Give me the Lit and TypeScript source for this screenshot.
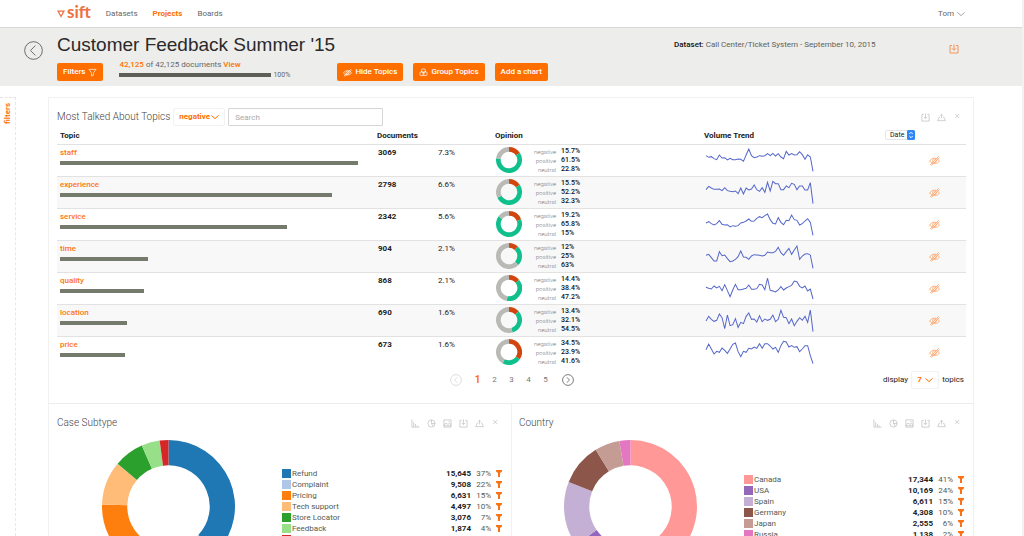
import { LitElement, html, svg, css } from "lit";
import { customElement, property } from "lit/decorators.js";

type Slice = { color: string; value: number };

function ringPath(start: number, end: number, outer: number, inner: number): string {
  const at = (t: number, r: number) => {
    const a = t * Math.PI * 2 - Math.PI / 2;
    return `${(Math.cos(a) * r).toFixed(2)} ${(Math.sin(a) * r).toFixed(2)}`;
  };
  const large = end - start > 0.5 ? 1 : 0;
  return `M${at(start, outer)}A${outer} ${outer} 0 ${large} 1 ${at(end, outer)}L${at(end, inner)}A${inner} ${inner} 0 ${large} 0 ${at(start, inner)}Z`;
}

@customElement("ring-chart")
export class RingChart extends LitElement {
  @property({ attribute: false }) slices: Slice[] = [];
  @property({ type: Number }) inner = 62;

  static styles = css`
    :host { display: block; }
    .ring { display: block; width: 100%; height: auto; }
  `;

  render() {
    const total = this.slices.reduce((sum, s) => sum + s.value, 0);
    let pos = 0;
    return html`<svg class="ring" viewBox="-100 -100 200 200">
      ${this.slices.map((s) => {
        const from = pos;
        pos += s.value / total;
        return svg`<path d=${ringPath(from, pos, 100, this.inner)} fill=${s.color}></path>`;
      })}
    </svg>`;
  }
}

const icons = {
  back: svg`<circle cx="10" cy="10" r="9.3"></circle><path d="M12 4.800 6.800 10l5.200 5.200"></path>`,
  prev: svg`<circle cx="10" cy="10" r="9"></circle><path d="M12 5.500 7.500 10l4.500 4.500"></path>`,
  next: svg`<circle cx="10" cy="10" r="9"></circle><path d="M8 5.500 12.500 10 8 14.500"></path>`,
  funnel: svg`<path d="M2 3h16l-6 8v5l-4 2v-7z"></path>`,
  down: svg`<path d="M1 6l9 8 9-8"></path>`,
  save: svg`<path d="M6 3H2v15h16V3h-4M10 1v11M6 8.500 10 12.500l4-4"></path>`,
  share: svg`<path d="M6.500 9H5l-3.500 8h17L15 9h-1.500M10 12V3M7 6l3-3 3 3"></path>`,
  close: svg`<path d="M5 2l9 9M14 2l-9 9"></path>`,
  bars: svg`<path d="M2 1v17h17M6 17V7M10 17v-6M14 17v-3"></path>`,
  clock: svg`<circle cx="10" cy="10" r="8"></circle><path d="M10 2v8h8M10 10l4 6"></path>`,
  image: svg`<path d="M2 2h16v16H2zM2 13l5-4 4 3 3-2 4 2M12 6h3M2 15h16"></path>`,
  eye: svg`<path d="M1 11c4-7 14-7 18 0-4 6-14 6-18 0zM6.500 10.500a3.500 3.500 0 1 0 7 0 3.500 3.500 0 1 0-7 0M2 18 18 2M4 19 19 5"></path>`,
  group: svg`<circle cx="10" cy="6.500" r="4.700"></circle><circle cx="6.500" cy="12.500" r="4.700"></circle><circle cx="13.500" cy="12.500" r="4.700"></circle>`,
};

@customElement("ui-icon")
export class UiIcon extends LitElement {
  @property() name: keyof typeof icons = "save";

  static styles = css`
    :host { display: inline-block; width: 10px; height: 10px; flex: none; }
    .glyph { display: block; width: 100%; height: 100%; fill: none; stroke: currentColor; stroke-width: var(--weight, 1.5); overflow: visible; }
  `;

  render() {
    return html`<svg class="glyph" viewBox="0 0 20 20">${icons[this.name]}</svg>`;
  }
}

interface Topic {
  name: string;
  docs: number;
  share: string;
  negative: number;
  positive: number;
  neutral: number;
  trend: number[];
}

const topics: Topic[] = [
  { name: "staff", docs: 3069, share: "7.3%", negative: 15.7, positive: 61.5, neutral: 22.8,
    trend: [32,37,35,41,44,30,39,38,45,40,44,44,42,43,49,30,12,32,38,36,32,34,32,26,32,25,33,26,36,41,19,30,26,30,29,20,29,43,29,36,79] },
  { name: "experience", docs: 2798, share: "6.6%", negative: 15.5, positive: 52.2, neutral: 32.3,
    trend: [38,28,33,37,37,36,41,32,41,43,44,42,50,33,51,33,39,36,24,38,43,32,46,16,42,13,20,20,38,38,27,32,19,22,38,27,27,39,39,17,80] },
  { name: "service", docs: 2342, share: "5.6%", negative: 19.2, positive: 65.8, neutral: 15,
    trend: [42,38,44,48,44,35,46,48,47,54,50,52,50,42,40,36,30,37,36,28,23,26,20,15,32,43,45,26,40,47,34,35,18,32,34,48,44,36,29,40,79] },
  { name: "time", docs: 904, share: "2.1%", negative: 12, positive: 25, neutral: 63,
    trend: [43,40,50,60,60,32,44,42,53,62,60,55,47,30,48,49,55,45,41,42,43,45,43,33,35,35,31,19,35,43,32,22,40,27,15,55,45,39,38,42,82] },
  { name: "quality", docs: 868, share: "2.1%", negative: 14.4, positive: 38.4, neutral: 47.2,
    trend: [43,46,48,39,45,40,53,35,53,71,51,34,50,50,48,46,36,49,49,47,34,36,50,15,52,54,57,51,41,51,45,41,37,24,26,40,45,39,54,48,78] },
  { name: "location", docs: 690, share: "1.6%", negative: 13.4, positive: 32.1, neutral: 54.5,
    trend: [48,34,43,49,46,27,38,71,30,62,59,41,67,52,56,34,24,43,42,51,32,50,42,46,43,30,50,43,16,37,38,56,42,62,49,38,46,34,52,15,80] },
  { name: "price", docs: 673, share: "1.6%", negative: 34.5, positive: 23.9, neutral: 41.6,
    trend: [38,21,36,51,43,46,33,40,49,36,22,18,44,59,43,46,34,36,30,34,20,34,20,20,27,36,31,46,26,13,15,30,26,31,29,44,36,26,26,56,80] },
];

type Entry = { label: string; color: string; value: number; share: string };

const caseSubtype: Entry[] = [
  { label: "Refund", color: "#1f77b4", value: 15645, share: "37%" },
  { label: "Complaint", color: "#aec7e8", value: 9508, share: "22%" },
  { label: "Pricing", color: "#ff7f0e", value: 6631, share: "15%" },
  { label: "Tech support", color: "#ffbb78", value: 4497, share: "10%" },
  { label: "Store Locator", color: "#2ca02c", value: 3076, share: "7%" },
  { label: "Feedback", color: "#98df8a", value: 1874, share: "4%" },
  { label: "Other", color: "#d62728", value: 894, share: "2%" },
];

const country: Entry[] = [
  { label: "Canada", color: "#ff9896", value: 17344, share: "41%" },
  { label: "USA", color: "#9467bd", value: 10169, share: "24%" },
  { label: "Spain", color: "#c5b0d5", value: 6611, share: "15%" },
  { label: "Germany", color: "#8c564b", value: 4308, share: "10%" },
  { label: "Japan", color: "#c49c94", value: 2555, share: "6%" },
  { label: "Russia", color: "#e377c2", value: 1138, share: "2%" },
];

@customElement("breakdown-panel")
export class BreakdownPanel extends LitElement {
  @property() heading = "";
  @property({ attribute: false }) entries: Entry[] = [];

  static styles = css`
    :host { display: block; padding: 10px 8px; }
    .head { display: flex; align-items: center; justify-content: space-between; height: 18px; }
    .heading { margin: 0; font-size: 10px; font-weight: 300; color: #444; }
    .tools { display: flex; gap: 7px; margin-right: 3px; }
    .tool { padding: 0; border: 0; background: none; color: #bbb; display: block; width: 9px; height: 9px; }
    .tool ui-icon { width: 9px; height: 9px; display: block; }
    .body { display: flex; align-items: center; margin-top: 8px; }
    .chart { flex: none; width: 133px; margin: 0 47px 0 45px; }
    .legend { flex: 1; border-collapse: collapse; font-size: 8px; line-height: 11px; color: #555a52; }
    .legend td { padding: 0; }
    .label { display: flex; align-items: center; gap: 1px; }
    .swatch { width: 9px; height: 9px; }
    .value { text-align: right; font-weight: 700; color: #222; }
    .share { width: 20px; text-align: right; }
    .pick { width: 12px; text-align: right; }
    .filter { padding: 0; border: 0; background: none; display: block; margin: 0 1px 0 auto; width: 6px; height: 7px; }
    .filter svg { display: block; width: 6px; height: 7px; fill: #f97316; }
  `;

  render() {
    const tools = [["bars", "Bar chart"], ["clock", "Pie chart"], ["image", "Image"], ["save", "Download"], ["share", "Share"], ["close", "Close"]];
    return html`
      <div class="head">
        <h2 class="heading">${this.heading}</h2>
        <div class="tools">
          ${tools.map(([n, l]) => html`<button class="tool" aria-label=${l}><ui-icon name=${n}></ui-icon></button>`)}
        </div>
      </div>
      <div class="body">
        <ring-chart class="chart" .slices=${this.entries}></ring-chart>
        <table class="legend">
          ${this.entries.map((e) => html`<tr>
            <td><span class="label"><i class="swatch" style="background:${e.color}"></i>${e.label}</span></td>
            <td class="value">${e.value.toLocaleString("en-US")}</td>
            <td class="share">${e.share}</td>
            <td class="pick"><button class="filter" aria-label="Filter by ${e.label}"><svg viewBox="0 0 6 7"><path d="M0 0h6v1.500L4 3v4H2V3L0 1.500z"></path></svg></button></td>
          </tr>`)}
        </table>
      </div>`;
  }
}

@customElement("app-root")
export class AppRoot extends LitElement {
  static styles = css`
    :host {
      display: flex; flex-direction: column; box-sizing: border-box;
      height: 100vh; overflow: hidden; background: #fff; border-right: 2px solid #f2f2f2;
      font-family: "Roboto", "Liberation Sans", Arial, sans-serif; font-size: 8px; line-height: 12px; color: #222;
    }
    button, select, input { font: inherit; color: inherit; box-sizing: border-box; }
    a { text-decoration: none; color: inherit; }
    .top { display: flex; align-items: center; height: 27px; padding: 0 57px; border-bottom: 1px solid #d8d8d8; color: #666; flex: none; }
    .logo { display: flex; align-items: center; gap: 2px; color: #ee7040; font: 700 17px/20px "Lato", sans-serif; margin-right: 15px; padding-bottom: 3px; }
    .logo svg { width: 8px; height: 8px; margin-top: 4px; }
    .nav { display: flex; flex: 1; gap: 15px; }
    .current { color: #ff7000; font-weight: 700; }
    .user { display: flex; align-items: center; gap: 3px; border: 0; padding: 0; background: none; }
    .user ui-icon { width: 8px; height: 8px; }

    .bar { display: flex; flex: none; background: #ededeb; height: 58px; padding: 0 48px 0 24px; }
    .back { width: 19px; height: 19px; margin: 13px 14px 0 0; padding: 0; border: 0; background: none; color: #666; --weight: 1; }
    .back ui-icon { width: 19px; height: 19px; display: block; }
    .summary { flex: 1; }
    .titles { display: grid; grid-template-columns: 1fr 300px; padding-top: 5px; }
    .title { margin: 0; font-family: "Liberation Sans", Arial, sans-serif; font-size: 19px; line-height: 24px; font-weight: 400; color: #2a2a2a; }
    .dataset { display: flex; justify-content: space-between; padding: 6px 15px 0 0; color: #5d625a; }
    .dataset b { font-weight: 500; color: #111; }
    .download { padding: 0; border: 0; background: none; color: #f5935a; width: 10px; height: 10px; margin-top: 5px; }
    .download ui-icon { display: block; --weight: 2; }
    .actions { display: flex; padding-top: 6px; }
    .action { display: flex; align-items: center; justify-content: center; gap: 3px; height: 18px; border: 0; border-radius: 2px; padding: 0 6px; background: #ff6f00; color: #fff; margin-right: 10px; white-space: nowrap; font-weight: 500; }
    .action ui-icon { width: 9px; height: 9px; }
    .progress { width: 208px; margin: -4px 10px 0 6px; color: #666; }
    .progress a, .progress em { color: #ff7000; font-style: normal; font-weight: 500; }
    .meter { display: flex; align-items: center; gap: 2px; font-size: 7px; line-height: 8px; }
    .track { width: 152px; height: 4px; background: #5d5e58; }

    .main { display: flex; align-items: flex-start; padding: 11px 48px 0 0; flex: 1; min-height: 0; }
    .side { width: 48px; align-self: stretch; flex: none; }
    .tab { box-sizing: border-box; width: 16px; height: 100%; padding: 5px 0 0; border: 0; border-top: 1px dashed #e4e4e4; border-right: 1px dashed #e8e8e8; background: none; color: #ff7000; display: flex; align-items: flex-start; justify-content: center; }
    .tab span { writing-mode: vertical-rl; transform: rotate(180deg); font-weight: 700; }
    .content { flex: 1; border: 1px solid #f1f1f1; }
    .panel { padding: 10px 7px 11px 8px; }
    .tools { display: flex; align-items: center; height: 18px; }
    .heading { margin: 0 3px 0 0; font-size: 10px; line-height: 18px; font-weight: 300; color: #444; }
    .drop { position: relative; display: inline-flex; align-items: center; color: #ff7000; }
    .drop select { appearance: none; height: 18px; border: 1px solid #f2f2f2; background: none; border-radius: 2px; padding: 0 14px 0 5px; font-weight: 700; }
    .drop ui-icon { position: absolute; right: 6px; width: 8px; height: 8px; pointer-events: none; --weight: 2.5; }
    .search { width: 155px; height: 18px; margin-left: 3px; border: 1px solid #d5d5d5; border-radius: 1px; padding: 0 6px; }
    .search::placeholder { color: #aaa; }
    .icons { display: flex; gap: 7px; margin: 0 4px 0 auto; color: #bbb; }
    .icons button { display: block; width: 9px; height: 9px; padding: 0; border: 0; background: none; }
    .icons ui-icon { display: block; width: 9px; height: 9px; }

    .topics { width: 100%; table-layout: fixed; border-collapse: separate; border-spacing: 0; }
    .topics th { height: 18px; padding: 0 3px; text-align: left; font-weight: 700; line-height: 17px; }
    .topics td { box-sizing: border-box; height: 32px; padding: 0 3px; border-top: 1px solid #e2e2e2; vertical-align: top; }
    .topics td { padding-top: 2px; }
    .topics tr:nth-child(even) td { background: #f8f8f8; }
    .c-docs { width: 61px; }
    .c-share { width: 57px; }
    .c-op { width: 209px; }
    .c-trend { width: 181px; }
    .c-hide { width: 84px; }
    .topics .name { padding-right: 16px; }
    .name a { color: #ff7410; display: block; font-weight: 500; }
    .amount { height: 4px; margin-top: 2px; background: #747a6c; }
    .topics .docs { font-weight: 700; padding-left: 4px; }
    .opinion { display: flex; align-items: center; height: 26px; gap: 12px; }
    .opinion ring-chart { width: 26px; margin-left: 1px; }
    .scores { display: grid; grid-template-columns: auto auto; column-gap: 5px; margin: 0; font-size: 7px; line-height: 9px; }
    .scores dt { text-align: right; color: #777; font-size: 6px; font-weight: 300; width: 22px; }
    .scores dd { margin: 0; color: #111; font-weight: 500; }
    .topics .trend { padding: 0 5px; }
    .spark { display: block; width: 107px; height: 31px; fill: none; stroke: #5567c9; stroke-width: 3; overflow: visible; }
    .topics .hide { text-align: left; padding: 10px 0 0 47px; }
    .hide button { display: block; width: 11px; height: 11px; padding: 0; border: 0; background: none; color: #ffaa72; }
    .hide ui-icon { width: 11px; height: 11px; --weight: 1.6; }
    .date { position: relative; display: inline-flex; align-items: center; font-weight: 400; line-height: 9px; vertical-align: middle; }
    .date select { appearance: none; height: 10px; width: 30px; padding: 0 9px 0 4px; border: 1px solid #e6e6e6; border-radius: 2px; background: #fff; font-size: 7px; }
    .date svg { position: absolute; right: 0; width: 8px; height: 10px; pointer-events: none; }
    .foot { display: grid; grid-template-columns: 1fr auto 1fr; align-items: center; height: 24px; }
    .pages { grid-column: 2; display: flex; align-items: center; color: #777; }
    .pages button { border: 0; padding: 0; background: none; width: 17px; height: 18px; text-align: center; }
    .pages .active { color: #ff7000; font-weight: 700; font-size: 10px; }
    .pages .step { width: 27px; display: flex; align-items: center; justify-content: center; color: #777; --weight: 1.6; }
    .pages .step:disabled { color: #ddd; }
    .pages ui-icon { width: 12px; height: 12px; }
    .count { display: flex; align-items: center; justify-content: flex-end; gap: 3px; padding-right: 2px; }
    .count select { width: 28px; }
    .charts { display: grid; grid-template-columns: 1fr 1fr; border-top: 1px solid #ededed; }
    .charts breakdown-panel + breakdown-panel { border-left: 1px solid #f1f1f1; padding-left: 7px; }
  `;

  private topicRow(t: Topic) {
    const line = t.trend.map((y, i) => `${i * 8},${y}`).join(" ");
    const ring = [
      { color: "#d2450f", value: t.negative },
      { color: "#0fc08c", value: t.positive },
      { color: "#b9bab5", value: t.neutral },
    ];
    return html`<tr>
      <td class="name"><a href="#${t.name}">${t.name}</a><div class="amount" style="width:${(t.docs / topics[0].docs) * 100}%"></div></td>
      <td class="docs">${t.docs}</td>
      <td>${t.share}</td>
      <td><div class="opinion">
        <ring-chart .slices=${ring} .inner=${64}></ring-chart>
        <dl class="scores">
          <dt>negative</dt><dd>${t.negative}%</dd>
          <dt>positive</dt><dd>${t.positive}%</dd>
          <dt>neutral</dt><dd>${t.neutral}%</dd>
        </dl>
      </div></td>
      <td class="trend"><svg class="spark" viewBox="0 0 320 93" preserveAspectRatio="none"><polyline points=${line}></polyline></svg></td>
      <td class="hide"><button aria-label="Hide ${t.name}"><ui-icon name="eye"></ui-icon></button></td>
    </tr>`;
  }

  render() {
    return html`
      <header class="top">
        <a class="logo" href="#home"><svg viewBox="0 0 16 16" fill="none" stroke="#ee7040" stroke-width="2.500"><path d="M2 2h12L8 13z"></path></svg><span>sift</span></a>
        <nav class="nav">
          <a href="#datasets">Datasets</a><a class="current" href="#projects">Projects</a><a href="#boards">Boards</a>
        </nav>
        <button class="user">Tom <ui-icon name="down"></ui-icon></button>
      </header>
      <section class="bar">
        <button class="back" aria-label="Back"><ui-icon name="back"></ui-icon></button>
        <div class="summary">
          <div class="titles">
            <h1 class="title">Customer Feedback Summer '15</h1>
            <div class="dataset"><span><b>Dataset:</b> Call Center/Ticket System - September 10, 2015</span>
              <button class="download" aria-label="Download"><ui-icon name="save"></ui-icon></button></div>
          </div>
          <div class="actions">
            <button class="action">Filters <ui-icon name="funnel"></ui-icon></button>
            <div class="progress">
              <div><em>42,125</em> of 42,125 documents <a href="#view">View</a></div>
              <div class="meter"><div class="track"></div>100%</div>
            </div>
            <button class="action"><ui-icon name="eye"></ui-icon>Hide Topics</button>
            <button class="action"><ui-icon name="group"></ui-icon>Group Topics</button>
            <button class="action">Add a chart</button>
          </div>
        </div>
      </section>
      <main class="main">
        <aside class="side"><button class="tab"><span>filters</span></button></aside>
        <div class="content">
          <section class="panel">
            <div class="tools">
              <h2 class="heading">Most Talked About Topics</h2>
              <span class="drop"><select aria-label="Opinion"><option>negative</option></select><ui-icon name="down"></ui-icon></span>
              <input class="search" type="search" placeholder="Search" aria-label="Search">
              <div class="icons">
                <button aria-label="Download"><ui-icon name="save"></ui-icon></button>
                <button aria-label="Share"><ui-icon name="share"></ui-icon></button>
                <button aria-label="Close"><ui-icon name="close"></ui-icon></button>
              </div>
            </div>
            <table class="topics">
              <colgroup><col><col class="c-docs"><col class="c-share"><col class="c-op"><col class="c-trend"><col class="c-hide"></colgroup>
              <thead><tr>
                <th>Topic</th><th colspan="2">Documents</th><th>Opinion</th><th>Volume Trend</th>
                <th><span class="date"><select aria-label="Sort by"><option>Date</option></select>
                  <svg viewBox="0 0 8 10"><rect width="8" height="10" rx="1.500" fill="#2f86f6"></rect><path d="M2.300 4 4 2.300 5.700 4M2.300 6 4 7.700 5.700 6" fill="none" stroke="#fff"></path></svg></span></th>
              </tr></thead>
              <tbody>${topics.map((t) => this.topicRow(t))}</tbody>
            </table>
            <div class="foot">
              <nav class="pages" aria-label="Pages">
                <button class="step" disabled aria-label="Previous"><ui-icon name="prev"></ui-icon></button>
                <button class="active">1</button><button>2</button><button>3</button><button>4</button><button>5</button>
                <button class="step" aria-label="Next"><ui-icon name="next"></ui-icon></button>
              </nav>
              <label class="count">display <span class="drop"><select><option>7</option></select><ui-icon name="down"></ui-icon></span> topics</label>
            </div>
          </section>
          <div class="charts">
            <breakdown-panel heading="Case Subtype" .entries=${caseSubtype}></breakdown-panel>
            <breakdown-panel heading="Country" .entries=${country}></breakdown-panel>
          </div>
        </div>
      </main>`;
  }
}
